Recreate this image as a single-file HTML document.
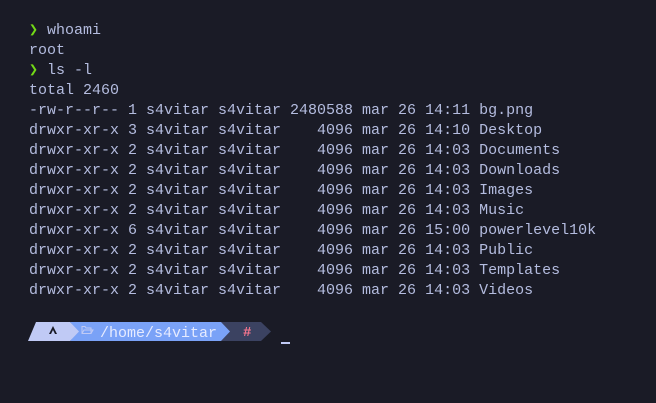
<!DOCTYPE html>
<html><head><meta charset="utf-8"><style>
html,body{margin:0;padding:0;background:#1a1b26;width:656px;height:403px;overflow:hidden}
pre{margin:0;position:absolute;left:29px;top:21px;font:15px/20px "Liberation Mono","DejaVu Sans Mono",monospace;color:#b4bcdf}
.g{color:#73da17;font-weight:bold}
.bar{position:absolute;top:322px;height:19px;left:28px}
.cur{position:absolute;left:281px;top:342px;width:9px;height:1.5px;background:#c0caf5}
</style></head><body>
<pre><span class="g">❯</span> whoami
root
<span class="g">❯</span> ls -l
total 2460
-rw-r--r-- 1 s4vitar s4vitar 2480588 mar 26 14:11 bg.png
drwxr-xr-x 3 s4vitar s4vitar    4096 mar 26 14:10 Desktop
drwxr-xr-x 2 s4vitar s4vitar    4096 mar 26 14:03 Documents
drwxr-xr-x 2 s4vitar s4vitar    4096 mar 26 14:03 Downloads
drwxr-xr-x 2 s4vitar s4vitar    4096 mar 26 14:03 Images
drwxr-xr-x 2 s4vitar s4vitar    4096 mar 26 14:03 Music
drwxr-xr-x 6 s4vitar s4vitar    4096 mar 26 15:00 powerlevel10k
drwxr-xr-x 2 s4vitar s4vitar    4096 mar 26 14:03 Public
drwxr-xr-x 2 s4vitar s4vitar    4096 mar 26 14:03 Templates
drwxr-xr-x 2 s4vitar s4vitar    4096 mar 26 14:03 Videos</pre>
<svg style="position:absolute;left:0;top:0" width="656" height="403">
<polygon points="214,322 261,322 271,331.5 261,341 206,341" fill="#3b4261"/>
<polygon points="70,322 221,322 230,331.5 221,341 70,341 78,331.5" fill="#7aa2f7"/>
<polygon points="36,322 70,322 79,331.5 70,341 28,341" fill="#c0caf5"/>
<polygon points="49,334 53,326 57,334 55,334 53,330 51,334" fill="#1a1b26"/>
<path d="M82,326.5h3l1,1.5h5v5.5h-9z M82,333.5l2,-3.5h9l-2,3.5" fill="none" stroke="#c0caf5" stroke-width="1"/>
<text x="100" y="337" font-family="Liberation Mono, monospace" font-size="15" fill="#e6ebff">/home/s4vitar</text>
<text x="243" y="336" font-family="Liberation Mono, monospace" font-size="14" font-weight="bold" fill="#f7768e">#</text>
</svg>
<div class="cur"></div>
</body></html>
